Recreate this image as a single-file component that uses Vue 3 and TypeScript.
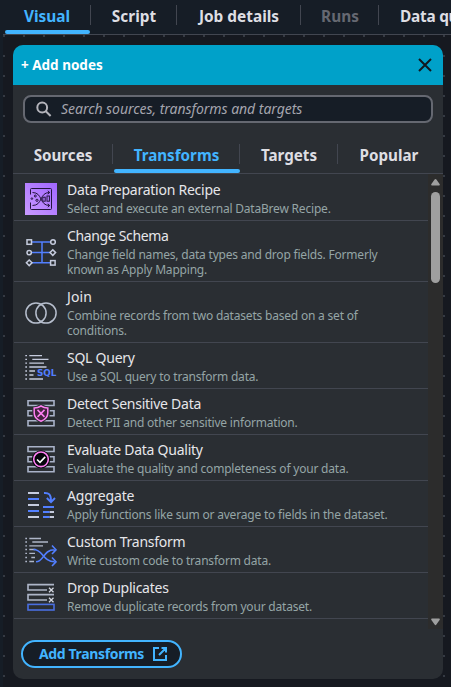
<script setup lang="ts">
interface TransformNode {
  icon: string
  title: string
  text: string
}

const mainTabs: { label: string; cls: string }[] = [
  { label: 'Visual', cls: 'visual active' },
  { label: 'Script', cls: 'script' },
  { label: 'Job details', cls: 'details' },
  { label: 'Runs', cls: 'runs disabled' },
  { label: 'Data quality', cls: 'quality' },
]

const nodeTabs: { label: string; cls: string }[] = [
  { label: 'Sources', cls: 'sources' },
  { label: 'Transforms', cls: 'transforms active' },
  { label: 'Targets', cls: 'targets' },
  { label: 'Popular', cls: 'popular' },
]

const nodes: TransformNode[] = [
  { icon: 'recipe', title: 'Data Preparation Recipe', text: 'Select and execute an external DataBrew Recipe.' },
  { icon: 'schema', title: 'Change Schema', text: 'Change field names, data types and drop fields. Formerly known as Apply Mapping.' },
  { icon: 'join', title: 'Join', text: 'Combine records from two datasets based on a set of conditions.' },
  { icon: 'sql', title: 'SQL Query', text: 'Use a SQL query to transform data.' },
  { icon: 'detect', title: 'Detect Sensitive Data', text: 'Detect PII and other sensitive information.' },
  { icon: 'evaluate', title: 'Evaluate Data Quality', text: 'Evaluate the quality and completeness of your data.' },
  { icon: 'aggregate', title: 'Aggregate', text: 'Apply functions like sum or average to fields in the dataset.' },
  { icon: 'custom', title: 'Custom Transform', text: 'Write custom code to transform data.' },
  { icon: 'duplicates', title: 'Drop Duplicates', text: 'Remove duplicate records from your dataset.' },
  { icon: 'none', title: 'Drop Fields', text: '' },
]
</script>

<template>
  <div class="page">
    <nav class="main-tabs">
      <div v-for="t in mainTabs" :key="t.label" class="main-tab" :class="t.cls"><span>{{ t.label }}</span></div>
    </nav>
    <main class="canvas">
      <section class="panel">
        <header class="panel-head">
          <h2>+ Add nodes</h2>
          <svg class="close" width="14" height="14" viewBox="0 0 14 14"><path d="M1 1L13 13M13 1L1 13" fill="none" stroke="#101a20" stroke-width="2" /></svg>
        </header>
        <div class="search">
          <svg width="16" height="16" viewBox="0 0 16 16" fill="none" stroke="#b4b4bb" stroke-width="2"><circle cx="6.2" cy="6.5" r="4.9" /><path d="M9.8 10.2L14.6 15" /></svg>
          <span>Search sources, transforms and targets</span>
        </div>
        <div class="node-tabs">
          <div v-for="t in nodeTabs" :key="t.label" class="node-tab" :class="t.cls"><span>{{ t.label }}</span></div>
        </div>
        <div class="list-wrap">
          <ul class="list">
            <li v-for="n in nodes" :key="n.title" class="row" :class="n.icon">
              <svg class="icon" width="32" height="32" viewBox="0 0 32 32" fill="none">
                <g v-if="n.icon === 'recipe'">
                  <defs><linearGradient id="violet" x1="0" y1="1" x2="1" y2="0"><stop offset="0" stop-color="#c99aff" /><stop offset="1" stop-color="#a166ff" /></linearGradient></defs>
                  <rect width="32" height="32" fill="url(#violet)" />
                  <g stroke="#23143d" stroke-width="1">
                    <path d="M5.5 11.5V6.5Q5.5 5.5 6.5 5.5H25.5Q26.5 5.5 26.5 6.5V25.5Q26.5 26.5 25.5 26.5H6.5Q5.5 26.5 5.5 25.5V19.5" />
                    <path d="M7.5 9.5C18 9.5 14 22.5 24.5 22.5M7.5 22.5C18 22.5 14 9.5 24.5 9.5M22.8 7.8L24.7 9.5L22.8 11.2M22.8 20.8L24.7 22.5L22.8 24.2" />
                    <rect x="17.8" y="14.2" width="2.4" height="4" /><rect x="22" y="13" width="2.4" height="5.2" />
                    <circle cx="10.3" cy="13" r="1" /><circle cx="12" cy="17.3" r="1.1" /><circle cx="6.9" cy="15.6" r=".8" />
                  </g>
                </g>
                <g v-else-if="n.icon === 'schema'">
                  <path d="M6 6H26M6 16.5H26M6 26.8H26M17 6V26.8" stroke="#527fff" stroke-width="1.5" />
                  <g fill="#2a2e33" stroke="#c5cbdd" stroke-width="1.5">
                    <rect x="2" y="3.8" width="4.5" height="4.5" /><circle cx="4.2" cy="16.6" r="2.2" /><path d="M4.2 24L7 26.8L4.2 29.6L1.4 26.8Z" />
                    <circle cx="28" cy="6" r="2.3" /><path d="M27.8 13.8L30.6 16.6L27.8 19.4L25 16.6Z" /><rect x="25.6" y="24.6" width="4.5" height="4.5" />
                  </g>
                </g>
                <g v-else-if="n.icon === 'join'" stroke="#b6becd" stroke-width="1.5"><circle cx="11" cy="16" r="10.1" /><circle cx="21" cy="16" r="10.1" /></g>
                <g v-else-if="n.icon === 'sql'">
                  <path d="M.3 4.6H2M.3 8.4H2M.3 12.2H2M.3 16H2M.3 20H2M.3 24H2M.3 28H2M4.3 4.6H17M7.3 8.4H23.5M4.3 12.2H19M4.3 16H21.5M4.3 20H10M4.3 24H8.5M4.3 28H18" stroke="#c5cbdd" stroke-width="1.3" />
                  <text x="12" y="25" class="sql-mark" textLength="19.5" lengthAdjust="spacingAndGlyphs">SQL</text>
                </g>
                <g v-else-if="n.icon === 'detect' || n.icon === 'evaluate'">
                  <path d="M3 3.8H29V8.5H3ZM3 23.8H29V28.8H3ZM7.5 13.7H3V18.7H7.5M24.5 13.7H29V18.7H24.5" stroke="#a9b2c8" stroke-width="1.6" />
                  <g v-if="n.icon === 'detect'">
                    <path d="M16 7L24.5 10.5V15.5C24.5 20 21 24.3 16 26.3C11 24.3 7.5 20 7.5 15.5V10.5Z" fill="#2a2e33" />
                    <path d="M16 9C18 10.3 20.4 11 22.8 11V16C22.8 20.2 19.5 22.9 16 24.2C12.5 22.9 9.2 20.2 9.2 16V11C11.6 11 14 10.3 16 9Z" fill="#44223f" stroke="#ff80f3" stroke-width="1.5" />
                    <path d="M12.5 12.9L19.5 19.9M19.5 12.9L12.5 19.9" stroke="#ff80f3" stroke-width="1.5" />
                  </g>
                  <g v-else>
                    <circle cx="16" cy="16.3" r="9" fill="#05050b" /><circle cx="16" cy="16.3" r="7.3" stroke="#ff80f3" stroke-width="1.6" />
                    <path d="M12 16.5L15 19.3L20.2 13.9" stroke="#fff" stroke-width="1.6" />
                  </g>
                </g>
                <g v-else-if="n.icon === 'aggregate'" stroke-width="1.9">
                  <path d="M3 4H14M3 16H14M3 28H14M24.5 23H29M24.5 28H29" stroke="#c5cbdd" />
                  <path d="M3 10H14M3 22H14M18 18H29M18 23H24.5M18 28H24.5M19 4C24 3.7 26 5.5 26 12M21.8 9L26 13.2L30 9" stroke="#527fff" />
                </g>
                <g v-else-if="n.icon === 'custom'">
                  <path d="M.3 3.5H2M.3 7H2M.3 10.8H2M.3 14.5H2M.3 18.4H2M.3 22.5H2M.3 26.5H2M4.3 3.5H16M7.3 7H23M4.3 10.8H18M4.3 14.5H10.5M4.3 18.4H10M6.3 22.5H10M4.3 26.5H9" stroke="#aeb6c8" stroke-width="1.3" />
                  <path d="M8.5 14.5C18 14.5 18 26.8 29.5 26.8M11 26.8C19 26.8 18 14.8 29.5 14.8M27 10.5L31 14.8L27 19M27 22.5L31 26.8L27 31" stroke="#527fff" stroke-width="1.6" />
                </g>
                <g v-else-if="n.icon === 'duplicates'" stroke-width="1.6">
                  <path d="M29 3.6H3V9H22M29 13.6H3V19H22" stroke="#aeb6c8" />
                  <path d="M24 6.8L28.5 11.3M28.5 6.8L24 11.3M24 16.8L28.5 21.3M28.5 16.8L24 21.3" stroke="#d5d9e2" stroke-width="1.3" />
                  <rect x="3" y="23.4" width="26" height="5.6" stroke="#4a6fe0" />
                </g>
              </svg>
              <div class="body"><h3>{{ n.title }}</h3><p>{{ n.text }}</p></div>
            </li>
          </ul>
          <div class="scrollbar">
            <svg width="9" height="8" viewBox="0 0 9 8"><path d="M4.5 1Q5 1 5.4 1.6L8.6 6Q9.3 7.5 8 7.5H1Q-.3 7.5 .4 6L3.6 1.6Q4 1 4.5 1Z" fill="#9f9f9f" /></svg>
            <div class="thumb"></div>
            <svg width="9" height="8" viewBox="0 0 9 8"><path d="M4.5 7.2Q5 7.2 5.4 6.6L8.6 2Q9.3 .4 8 .4H1Q-.3 .4 .4 2L3.6 6.6Q4 7.2 4.5 7.2Z" fill="#9f9f9f" /></svg>
          </div>
        </div>
        <footer class="foot">
          <button class="add" type="button">
            <span>Add Transforms</span>
            <svg width="16" height="16" viewBox="0 0 16 16" fill="none" stroke="#42b4ff" stroke-width="2"><path d="M7 2H2V14H14V9M9.5 2H14V6.5M14 2L7 9" /></svg>
          </button>
        </footer>
      </section>
    </main>
  </div>
</template>

<style>
body { background: #161d26; overflow: hidden; }
</style>

<style scoped>
* { box-sizing: border-box; }
h2, h3, p, ul { margin: 0; padding: 0; }
.page { width: 451px; height: 687px; overflow: hidden; background: #161d26; font-family: "Noto Sans", "Open Sans", sans-serif; color: #dedee3; display: flex; flex-direction: column; }
.main-tabs { display: flex; height: 34px; padding: 0 0 0 5px; flex: none; }
.main-tab { position: relative; flex: none; height: 34px; display: flex; justify-content: center; align-items: center; padding-bottom: 1px; font-size: 15.4px; line-height: 20px; font-weight: 700; white-space: nowrap; }
.main-tab:not(:last-child)::after { content: ""; position: absolute; right: 0; top: 5px; width: 1px; height: 20px; background: #424650; }
.main-tab.active::before, .node-tab.active::before { content: ""; position: absolute; left: 0; right: 1px; bottom: 0; height: 4px; border-radius: 2px; background: #42b4ff; }
.node-tab.active::before { left: 1px; right: 0; }
.visual { width: 86px; padding-right: 2px; }
.script { width: 86px; }
.details { width: 124px; }
.runs { width: 78px; }
.quality { justify-content: flex-start; padding-left: 21px; letter-spacing: -.25px; }
.active { color: #42b4ff; }
.disabled { color: #656871; }
.canvas { margin-left: 3px; flex: 1; border-top: 1px solid #424650; padding: 10px 8px 8px 10px; background-color: #161920; background-image: radial-gradient(circle at 1px 1px, #353a43 0, #353a43 .9px, transparent 1.1px); background-size: 20px 20px; }
.panel { width: 430px; height: 634px; border-radius: 10px; overflow: hidden; background: #2a2e33; display: flex; flex-direction: column; }
.panel-head { height: 40px; flex: none; background: #00a1c9; display: flex; justify-content: space-between; align-items: center; padding: 0 11px 0 8px; }
.panel-head h2 { color: #fff; font-size: 13.5px; line-height: 20px; font-weight: 700; }
.search { height: 28px; margin: 10px 10px 0; flex: none; border: 2px solid #656871; border-radius: 8px; background: #161d26; display: flex; align-items: center; gap: 9px; padding-left: 11px; }
.search span { font-style: italic; font-size: 14px; line-height: 20px; letter-spacing: -.04px; color: #a4a4ad; white-space: nowrap; }
.node-tabs { height: 51px; flex: none; display: flex; border-bottom: 1px solid #424650; }
.node-tab { position: relative; display: flex; justify-content: center; align-items: center; padding-top: 14px; font-size: 15.2px; line-height: 20px; font-weight: 700; }
.node-tab:not(:last-child)::after { content: ""; position: absolute; right: 0; top: 21px; width: 1px; height: 20px; background: #424650; }
.sources { width: 100px; }
.transforms { width: 127px; }
.targets { width: 98px; }
.popular { width: 102px; }
.list-wrap { flex: none; height: 455px; display: flex; overflow: hidden; }
.list { width: 415px; padding: 1px 0 0 1px; list-style: none; }
.row { display: flex; min-height: 46px; padding: 7px 20px 4px 11px; border-bottom: 1px solid #424650; align-items: center; }
.icon { flex: none; display: block; }
.schema .icon, .join .icon { margin-bottom: 1px; }
.body { margin: -1px 0 0 10px; flex: 1; min-width: 0; }
.body h3 { font-weight: 400; font-size: 14px; line-height: 17px; letter-spacing: -.25px; color: #e6e6ea; }
.schema h3 { letter-spacing: -.35px; }
.join h3 { letter-spacing: .1px; }
.aggregate h3 { letter-spacing: -.2px; }
.none .body { align-self: flex-start; margin-top: 0; }
.body p { font-size: 12px; line-height: 15px; letter-spacing: -.2px; padding-top: 3px; color: #95a5a6; }
.sql-mark { font: 700 8.5px "DejaVu Sans", sans-serif; fill: #527fff; }
.scrollbar { width: 15px; background: #2c2c2c; padding: 4px 3px 3px; display: flex; flex-direction: column; align-items: center; }
.scrollbar .thumb { width: 9px; height: 91px; margin: 6px 0 auto; border-radius: 4.5px; background: #9f9f9f; }
.foot { flex: 1; padding: 11px 8px; }
.add { display: flex; align-items: center; justify-content: center; gap: 8px; width: 161px; height: 28px; padding: 0 0 0 4px; border: 2px solid #42b4ff; border-radius: 14px; background: #161d26; color: #42b4ff; font: 700 14px/20px "Noto Sans", sans-serif; letter-spacing: -.35px; }
</style>
